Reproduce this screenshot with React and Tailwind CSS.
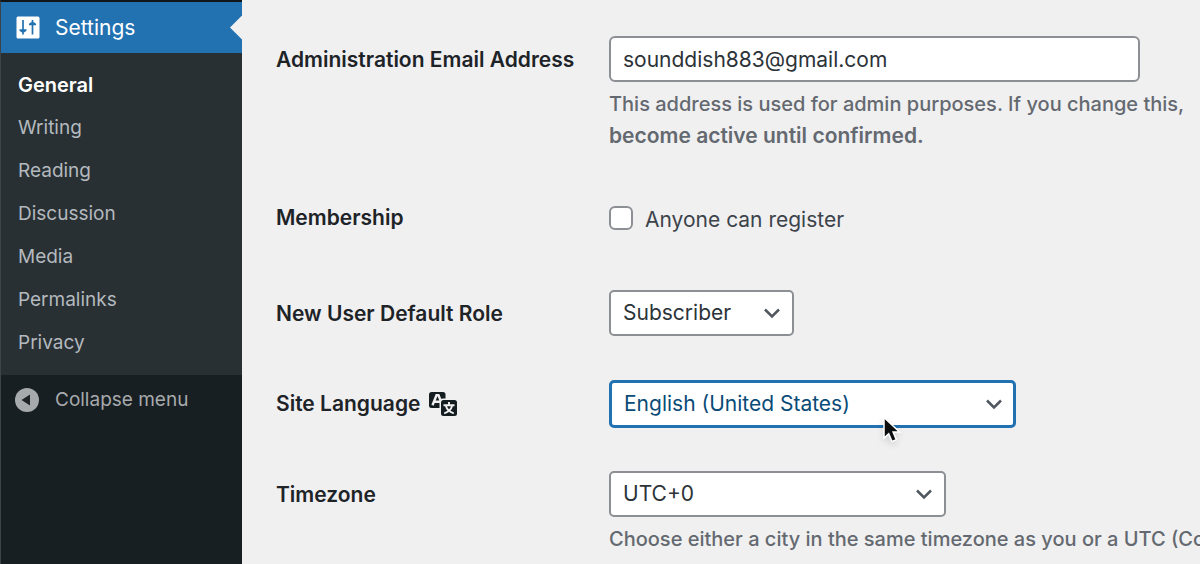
import React, { useState } from 'react';

const submenu = ['General', 'Writing', 'Reading', 'Discussion', 'Media', 'Permalinks', 'Privacy'];

const SettingsIcon = () => (
  <svg className="w-6 h-6" viewBox="0 0 24 24" fill="none" aria-hidden="true">
    <rect x="0.5" y="0.500" width="23" height="22" rx="1.5" fill="#fff" />
    <path d="M7 4v14.500M16.500 4v14.500" stroke="#2271b1" strokeWidth="1.700" />
    <path d="M3.500 13.200h7v1.500l-2 1.500h-3l-2-1.500zM13 9.300h7v-1.500l-2-1.500h-3l-2 1.500z" fill="#2271b1" />
  </svg>
);

const CollapseIcon = () => (
  <svg className="w-6 h-6" viewBox="0 0 24 24" aria-hidden="true">
    <circle cx="12" cy="12" r="12" fill="#a7aaad" />
    <path d="M15 6.500v11L6.500 12z" fill="#1d2327" />
  </svg>
);

const TranslationIcon = () => (
  <svg className="w-[30px] h-[26px]" viewBox="0 0 30 26" fill="none" aria-hidden="true">
    <rect x="1" y="1" width="16.500" height="16" rx="2.500" fill="#161d21" />
    <path d="M4.500 14.200L8.500 4.200h2l4 10M6 10.800h7" stroke="#f0f0f1" strokeWidth="2.400" />
    <rect x="11.500" y="7.500" width="18.500" height="18.500" rx="3.500" fill="#f0f0f1" />
    <rect x="13" y="9" width="16" height="16" rx="2.500" fill="#161d21" />
    <path d="M21 11v3M15.500 14.200h11M17.800 14.500c1 4 4 6.500 8 7.800M24.200 14.500c-1 4-4 6.500-8 7.800" stroke="#f0f0f1" strokeWidth="1.900" />
  </svg>
);

const Cursor = () => (
  <svg className="w-5 h-7 drop-shadow-md" viewBox="0 0 20 28" aria-hidden="true">
    <path d="M2 1.500v20.500l4.700-4.300 3.300 7.800 4.300-1.800-3.200-7.700h6.400z" fill="#0b0d0e" stroke="#fff" strokeWidth="1.500" />
  </svg>
);

const Select = ({ id, options, width, active }) => (
  <div className={`relative ${width}`}>
    <select
      id={id}
      className={`block w-full appearance-none rounded-[5px] bg-white pl-3 pr-12 outline-none ${
        active ? 'h-12 border-3 border-[#2271b1] text-[#0a4b78]' : 'h-[46px] border-2 border-[#8c8f94] text-[#2c3338]'
      }`}
    >
      {options.map((option) => (
        <option key={option}>{option}</option>
      ))}
    </select>
    <svg
      className="pointer-events-none absolute right-[13px] top-1/2 h-4 w-[18px] -translate-y-1/2"
      viewBox="0 0 18 16"
      fill="none"
      aria-hidden="true"
    >
      <path d="M2 4.500l7 7 7-7" stroke="#50575e" strokeWidth="2.500" />
    </svg>
  </div>
);

const Row = ({ label, htmlFor, icon, className = '', children }) => (
  <div className={`grid grid-cols-[333px_minmax(0,1fr)] ${className}`}>
    <label htmlFor={htmlFor} className="flex h-12 items-center gap-2 whitespace-nowrap font-semibold text-[#1d2327]">
      {label}
      {icon}
    </label>
    <div>{children}</div>
  </div>
);

const Description = ({ children }) => (
  <p className="mt-[6px] whitespace-nowrap text-xl leading-8 font-medium text-[#646970]">{children}</p>
);

const Sidebar = () => (
  <nav className="w-[242px] shrink-0 border-l border-t-2 border-l-[#3c4449] border-t-[#101517] bg-[#181f22] text-[19px] text-[#b4b9be]">
    <a href="#settings" className="relative flex h-[51px] items-center gap-[15px] bg-[#2271b1] pl-[15px] text-[21px] text-white">
      <SettingsIcon />
      Settings
      <span className="absolute right-0 top-1/2 h-6 w-3 -translate-y-1/2 bg-[#f0f0f1] [clip-path:polygon(100%_0,0_50%,100%_100%)]" />
    </a>
    <ul className="bg-[#283034] pt-[10px] pb-[11px]">
      {submenu.map((item, index) => (
        <li key={item}>
          <a
            href={`#${item.toLowerCase()}`}
            className={`flex h-[43px] items-center pl-[17px] ${index === 0 ? 'text-xl font-semibold text-white' : ''}`}
          >
            {item}
          </a>
        </li>
      ))}
    </ul>
    <button type="button" className="flex h-[50px] w-full items-center gap-4 pl-[14px] text-[#a7aaad]">
      <CollapseIcon />
      Collapse menu
    </button>
  </nav>
);

export default function App() {
  const [email, setEmail] = useState('sounddish883@gmail.com');
  const [canRegister, setCanRegister] = useState(false);

  return (
    <div className="flex h-screen overflow-hidden bg-[#f0f0f1] font-['Inter',sans-serif] text-[21px] leading-8 text-[#3c434a]">
      <Sidebar />
      <main className="min-w-0 flex-1 pl-[34px] pt-9">
        <Row label="Administration Email Address" htmlFor="admin-email">
          <input
            id="admin-email"
            type="email"
            value={email}
            onChange={(e) => setEmail(e.target.value)}
            className="block h-[46px] w-full max-w-[531px] rounded-[6px] border-2 border-[#8c8f94] bg-white px-3 text-[#2c3338] outline-none"
          />
          <Description>
            This address is used for admin purposes. If you change this,
            <br />
            <strong className="text-[21px] font-semibold">become active until confirmed.</strong>
          </Description>
        </Row>

        <Row label="Membership" htmlFor="membership" className="mt-[42px]">
          <div className="flex h-12 items-center gap-3">
            <input
              id="membership"
              type="checkbox"
              checked={canRegister}
              onChange={(e) => setCanRegister(e.target.checked)}
              className="h-6 w-6 appearance-none rounded-[6px] border-2 border-[#8c8f94] bg-white checked:bg-[#2271b1]"
            />
            <label htmlFor="membership" className="pt-1">Anyone can register</label>
          </div>
        </Row>

        <Row label="New User Default Role" htmlFor="default-role" className="mt-12">
          <Select id="default-role" width="w-[185px]" options={['Subscriber', 'Contributor', 'Author', 'Editor', 'Administrator']} />
        </Row>

        <Row label="Site Language" htmlFor="site-language" icon={<TranslationIcon />} className="mt-[42px]">
          <div className="relative w-[407px]">
            <Select id="site-language" width="w-full" active options={['English (United States)']} />
            <span className="pointer-events-none absolute left-[273px] top-9">
              <Cursor />
            </span>
          </div>
        </Row>

        <Row label="Timezone" htmlFor="timezone" className="mt-[43px]">
          <Select id="timezone" width="w-[337px]" options={['UTC+0']} />
          <Description>
            Choose either a city in the same timezone as you or a UTC (Coordinated Universal Time) time offset.
          </Description>
        </Row>
      </main>
    </div>
  );
}
